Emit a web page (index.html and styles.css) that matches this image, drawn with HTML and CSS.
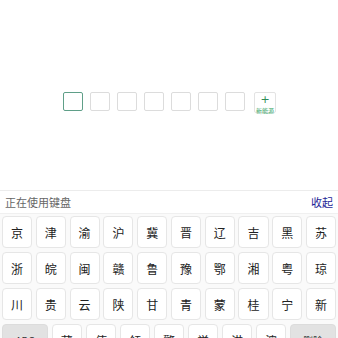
FILE: index.html
```html
<!DOCTYPE html>
<html lang="zh">
<head>
<meta charset="utf-8">
<link rel="stylesheet" href="styles.css">
</head>
<body>
<div class="page">
  <div class="plate-area">
    <div class="plate">
      <div class="cell active"></div>
      <div class="cell"></div>
      <div class="cell"></div>
      <div class="cell"></div>
      <div class="cell"></div>
      <div class="cell"></div>
      <div class="cell"></div>
      <div class="cell new-energy">
        <span class="plus">+</span>
        <span class="ne-label">新能源</span>
      </div>
    </div>
  </div>
  <div class="keyboard">
    <div class="kb-head">
      <span class="kb-status">正在使用键盘</span>
      <span class="kb-close">收起</span>
    </div>
    <div class="kb-body">
      <div class="kb-row">
        <div class="key">京</div><div class="key">津</div><div class="key">渝</div><div class="key">沪</div><div class="key">冀</div><div class="key">晋</div><div class="key">辽</div><div class="key">吉</div><div class="key">黑</div><div class="key">苏</div>
      </div>
      <div class="kb-row">
        <div class="key">浙</div><div class="key">皖</div><div class="key">闽</div><div class="key">赣</div><div class="key">鲁</div><div class="key">豫</div><div class="key">鄂</div><div class="key">湘</div><div class="key">粤</div><div class="key">琼</div>
      </div>
      <div class="kb-row">
        <div class="key">川</div><div class="key">贵</div><div class="key">云</div><div class="key">陕</div><div class="key">甘</div><div class="key">青</div><div class="key">蒙</div><div class="key">桂</div><div class="key">宁</div><div class="key">新</div>
      </div>
      <div class="kb-row">
        <div class="key wide func">ABC</div><div class="key">藏</div><div class="key">使</div><div class="key">领</div><div class="key">警</div><div class="key">学</div><div class="key">港</div><div class="key">澳</div><div class="key wide func">删除</div>
      </div>
    </div>
  </div>
</div>
</body>
</html>
```

FILE: styles.css
```css
html, body {
  margin: 0;
  padding: 0;
  background: #ffffff;
}
body {
  font-family: "Noto Sans CJK SC", "Noto Sans", sans-serif;
  width: 338px;
  height: 338px;
  overflow: hidden;
}
.page {
  display: flex;
  flex-direction: column;
  height: 338px;
}
.plate-area {
  flex: 0 0 190px;
  display: flex;
  justify-content: center;
  padding-top: 92px;
  box-sizing: border-box;
}
.plate {
  display: flex;
  align-items: flex-start;
  gap: 7px;
  padding-left: 1px;
}
.cell {
  width: 20px;
  height: 19px;
  border: 1px solid #dcdcdc;
  border-radius: 2px;
  box-sizing: border-box;
  background: #fff;
}
.cell.active {
  border-color: #5f9f88;
}
.cell.new-energy {
  width: 22px;
  height: 21px;
  margin-left: 2px;
  display: flex;
  flex-direction: column;
  align-items: center;
  border-color: #e3e3e3;
}
.plus {
  color: #2e8b57;
  font-size: 11px;
  line-height: 11px;
  margin-top: 1px;
  font-family: "DejaVu Sans", sans-serif;
}
.ne-label {
  color: #3aa86a;
  font-size: 6px;
  line-height: 6px;
  white-space: nowrap;
  margin-top: 3px;
}
.keyboard {
  flex: none;
  border-top: 1px solid #ececec;
  background: #ffffff;
}
.kb-head {
  height: 22px;
  display: flex;
  align-items: center;
  justify-content: space-between;
  padding: 0 5px;
  border-bottom: 1px solid #f0f0f0;
  font-size: 11px;
}
.kb-status {
  color: #666;
}
.kb-close {
  color: #1e1e96;
}
.kb-body {
  padding: 2px 2px 0;
  background: #fafafa;
  display: flex;
  flex-direction: column;
  gap: 4px;
}
.kb-row {
  display: flex;
  gap: 3.6px;
}
.key {
  flex: 1;
  height: 32px;
  box-sizing: border-box;
  border: 1px solid #e6e6e6;
  border-radius: 4px;
  background: #fff;
  display: flex;
  align-items: center;
  justify-content: center;
  font-size: 12px;
  color: #222;
}
.key.wide {
  flex: 0 0 46px;
}
.key.func {
  background: #e2e2e2;
  border-color: #dcdcdc;
  font-size: 10px;
  color: #333;
}
```
